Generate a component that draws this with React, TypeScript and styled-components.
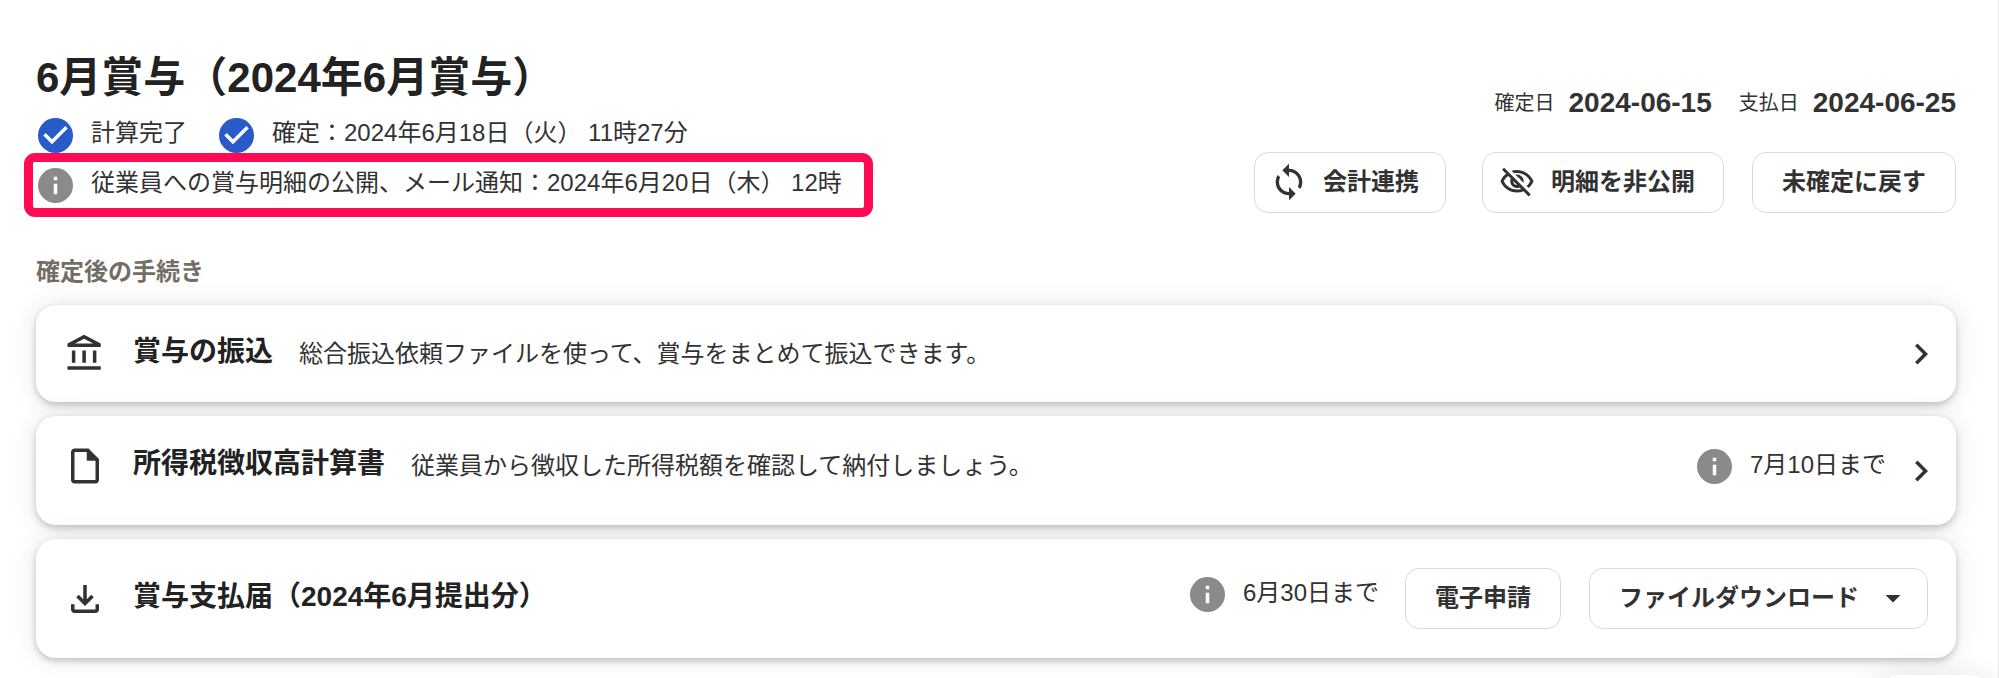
import React from "react";
import styled, { createGlobalStyle } from "styled-components";

const GlobalStyle = createGlobalStyle`
  *, *::before, *::after { box-sizing: border-box; }
  body {
    margin: 0;
    background: #fff;
    color: #323232;
    font-family: "Liberation Sans", "Noto Sans CJK JP", sans-serif;
    font-size: 24px;
    line-height: 36px;
  }
  h1, h2, h3, p, dl, dd, ul { margin: 0; padding: 0; }
`;

const Page = styled.main`
  min-height: 100vh;
  padding: 48px 42px 20px 36px;
  border-right: 1px solid #e9e9e9;
`;

const Header = styled.header`
  display: flex;
  justify-content: space-between;
`;

const HeaderSide = styled.div`
  display: flex;
  flex-direction: column;
  align-items: flex-end;
  gap: 31px;
  padding-top: 37px;
`;

const Title = styled.h1`
  font-size: 42px;
  line-height: 60px;
  color: #222;
`;

const StatusRow = styled.div`
  display: flex;
  gap: 32px;
  margin: 9px 0 0 2px;
`;

const Status = styled.p`
  display: flex;
  align-items: center;
  gap: 18px;
  white-space: pre;
`;

const StatusText = styled.span`
  padding-bottom: 4px;
  line-height: 32px;
`;

const Highlight = styled.div`
  width: max-content;
  margin: 0 0 0 -12px;
  padding: 5px 22px 5px 5px;
  border: 9px solid #ff0a55;
  border-radius: 11px;
`;

const Dates = styled.dl`
  display: flex;
  gap: 27px;
`;

const DateItem = styled.div`
  display: flex;
  align-items: center;
  gap: 14px;

  dt { font-size: 20px; }
  dd { font-size: 28px; font-weight: bold; }
`;

const Actions = styled.div`
  display: flex;
  align-items: center;
  gap: 28px;
`;

type ButtonKind = "plain" | "sync" | "icon" | "menu";

const buttonPadding: Record<ButtonKind, string> = {
  plain: "0 29px 2px",
  sync: "0 26px 2px 14px",
  icon: "0 28px 2px 16px",
  menu: "0 16px 2px 29px",
};

const Button = styled.button<{ $kind?: ButtonKind }>`
  display: flex;
  align-items: center;
  gap: ${(p) => (p.$kind === "sync" ? 14 : 16)}px;
  height: 61px;
  margin: 0 ${(p) => (p.$kind === "sync" ? 8 : 0)}px 0 0;
  padding: ${(p) => buttonPadding[p.$kind ?? "plain"]};
  border: 1px solid #d9d9d9;
  border-radius: 14px;
  background: #fff;
  color: #323232;
  font: bold 24px/36px "Liberation Sans", "Noto Sans CJK JP", sans-serif;
  white-space: nowrap;
  cursor: pointer;
`;

const SectionTitle = styled.h2`
  margin: 37px 0 15px;
  font-size: 24px;
  line-height: 36px;
  color: #736e64;
`;

const CardList = styled.ul`
  display: flex;
  flex-direction: column;
  gap: 14px;
  list-style: none;
`;

const Card = styled.li<{ $height: number; $endPad: number }>`
  display: flex;
  align-items: center;
  min-height: ${(p) => p.$height}px;
  padding: 0 ${(p) => p.$endPad}px 0 28px;
  border-radius: 20px;
  background: #fff;
  box-shadow: 0 0 28px rgba(0, 0, 0, 0.1), 0 3px 7px rgba(0, 0, 0, 0.2);
`;

const CardMain = styled.div<{ $lift?: number }>`
  display: flex;
  flex: 1;
  align-items: center;
  padding-bottom: ${(p) => p.$lift ?? 0}px;
`;

const CardTitle = styled.h3`
  margin: 0 26px 0 27px;
  font-size: 28px;
  line-height: 40px;
  padding-bottom: 4px;
  color: #222;
`;

const CardLink = styled.a`
  display: flex;
  color: #323232;
`;

const Deadline = styled.p<{ $end: number }>`
  display: flex;
  align-items: center;
  gap: 18px;
  margin-right: ${(p) => p.$end}px;
  padding-bottom: 8px;
  white-space: nowrap;
`;

const Svg = styled.svg`
  display: block;
  flex: none;
  fill: currentColor;
`;

const Floating = styled.aside`
  position: fixed;
  right: 8px;
  bottom: -57px;
  width: 112px;
  height: 60px;
  border-radius: 20px;
  background: #fff;
  box-shadow: 0 0 28px rgba(0, 0, 0, 0.1);
`;

const paths = {
  sync: "M12 4V1L8 5l4 4V6c3.31 0 6 2.69 6 6 0 1.01-.25 1.97-.7 2.8l1.46 1.46C19.54 15.03 20 13.57 20 12c0-4.42-3.58-8-8-8zm0 14c-3.31 0-6-2.69-6-6 0-1.01.25-1.97.7-2.8L5.24 7.74C4.46 8.97 4 10.43 4 12c0 4.42 3.58 8 8 8v3l4-4-4-4v3z",
  hidden:
    "M12 6c3.79 0 7.17 2.13 8.82 5.5-.59 1.22-1.42 2.27-2.41 3.12l1.41 1.41c1.39-1.23 2.49-2.77 3.18-4.53C21.27 7.11 17 4 12 4c-1.27 0-2.49.2-3.64.57l1.65 1.65C10.66 6.09 11.32 6 12 6zm-1.07 1.14L13 9.21c.57.25 1.03.71 1.28 1.28l2.07 2.07c.08-.34.14-.7.14-1.07C16.5 9.01 14.48 7 12 7c-.37 0-.72.05-1.07.14zM2.01 3.87l2.68 2.68C3.06 7.83 1.77 9.53 1 11.5 2.73 15.89 7 19 12 19c1.52 0 2.98-.29 4.32-.82l3.42 3.42 1.41-1.41L3.42 2.45 2.01 3.87zm7.5 7.5l2.61 2.61c-.04.01-.08.02-.12.02-1.38 0-2.5-1.12-2.5-2.5 0-.05.01-.08.01-.13zm-3.4-3.4l1.75 1.75c-.23.55-.36 1.15-.36 1.78 0 2.48 2.02 4.5 4.5 4.5.63 0 1.23-.13 1.77-.36l.98.98c-.88.24-1.8.38-2.75.38-3.79 0-7.17-2.13-8.82-5.5.7-1.43 1.72-2.61 2.93-3.53z",
  bank: "M6.5 10h-2v7h2v-7zm6 0h-2v7h2v-7zm8.5 9H2v2h19v-2zm-2.5-9h-2v7h2v-7zm-7-6.74L16.71 6H6.29l5.21-2.74m0-2.26L2 6v2h19V6l-9.5-5z",
  file: "M14 2H6c-1.1 0-1.99.9-1.99 2L4 20c0 1.1.89 2 1.99 2H18c1.1 0 2-.9 2-2V8l-6-6zM6 20V4h7v5h5v11H6z",
  download:
    "M18 15v3H6v-3H4v3c0 1.1.9 2 2 2h12c1.1 0 2-.9 2-2v-3h-2zm-1-4l-1.41-1.41L13 12.17V4h-2v8.17L8.41 9.59 7 11l5 5 5-5z",
  chevron: "M10 6L8.59 7.41 13.17 12l-4.58 4.59L10 18l6-6z",
  caret: "M7 10l5 5 5-5z",
};

function Icon({ name, size = 42 }: { name: keyof typeof paths; size?: number }) {
  return (
    <Svg width={size} height={size} viewBox="0 0 24 24" aria-hidden="true">
      <path d={paths[name]} />
    </Svg>
  );
}

function CheckIcon() {
  return (
    <Svg width={35} height={35} viewBox="2 2 20 20" aria-hidden="true">
      <circle cx="12" cy="12" r="10" fill="#285ac8" />
      <path fill="#fff" d="M10 17l-5-5 1.41-1.41L10 14.17l7.59-7.59L19 8z" />
    </Svg>
  );
}

function InfoIcon() {
  return (
    <Svg width={35} height={35} viewBox="2 2 20 20" aria-hidden="true">
      <circle cx="12" cy="12" r="10" fill="#8c8989" />
      <path fill="#fff" d="M11 7h2v2h-2zM11 11h2v6h-2z" />
    </Svg>
  );
}

export default function App() {
  return (
    <>
      <GlobalStyle />
      <Page>
        <Header>
          <div>
            <Title>6月賞与（2024年6月賞与）</Title>
            <StatusRow>
              <Status>
                <CheckIcon />
                <StatusText>計算完了</StatusText>
              </Status>
              <Status>
                <CheckIcon />
                <StatusText>確定：2024年6月18日（火） 11時27分</StatusText>
              </Status>
            </StatusRow>
            <Highlight>
              <Status>
                <InfoIcon />
                <StatusText>
                  従業員への賞与明細の公開、メール通知：2024年6月20日（木） 12時
                </StatusText>
              </Status>
            </Highlight>
          </div>
          <HeaderSide>
            <Dates>
              <DateItem>
                <dt>確定日</dt>
                <dd>2024-06-15</dd>
              </DateItem>
              <DateItem>
                <dt>支払日</dt>
                <dd>2024-06-25</dd>
              </DateItem>
            </Dates>
            <Actions>
              <Button type="button" $kind="sync">
                <Icon name="sync" size={40} />
                会計連携
              </Button>
              <Button type="button" $kind="icon">
                <Icon name="hidden" size={36} />
                明細を非公開
              </Button>
              <Button type="button">未確定に戻す</Button>
            </Actions>
          </HeaderSide>
        </Header>

        <SectionTitle>確定後の手続き</SectionTitle>
        <CardList>
          <Card $height={97} $endPad={14}>
            <CardMain>
              <Icon name="bank" />
              <CardTitle>賞与の振込</CardTitle>
              <p>総合振込依頼ファイルを使って、賞与をまとめて振込できます。</p>
            </CardMain>
            <CardLink href="#transfer" aria-label="賞与の振込">
              <Icon name="chevron" />
            </CardLink>
          </Card>
          <Card $height={109} $endPad={14}>
            <CardMain $lift={10}>
              <Icon name="file" />
              <CardTitle>所得税徴収高計算書</CardTitle>
              <p>従業員から徴収した所得税額を確認して納付しましょう。</p>
            </CardMain>
            <Deadline $end={14}>
              <InfoIcon />
              <StatusText>7月10日まで</StatusText>
            </Deadline>
            <CardLink href="#income-tax" aria-label="所得税徴収高計算書">
              <Icon name="chevron" />
            </CardLink>
          </Card>
          <Card $height={119} $endPad={28}>
            <CardMain>
              <Icon name="download" />
              <CardTitle>賞与支払届（2024年6月提出分）</CardTitle>
            </CardMain>
            <Deadline $end={26}>
              <InfoIcon />
              <StatusText>6月30日まで</StatusText>
            </Deadline>
            <Actions>
              <Button type="button">電子申請</Button>
              <Button type="button" $kind="menu" aria-haspopup="menu">
                ファイルダウンロード
                <Icon name="caret" size={36} />
              </Button>
            </Actions>
          </Card>
        </CardList>
      </Page>
      <Floating />
    </>
  );
}
